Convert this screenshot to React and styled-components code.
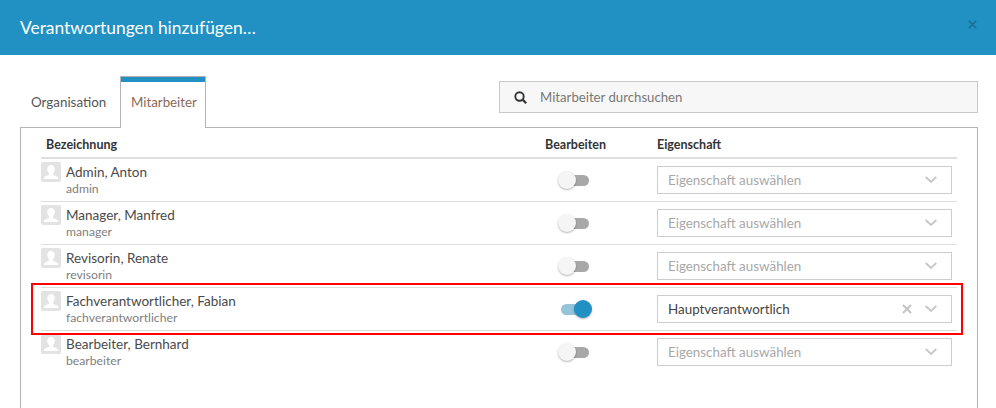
import React from "react";
import styled, { createGlobalStyle } from "styled-components";

const Global = createGlobalStyle`
  html, body {
    margin: 0;
    padding: 0;
    background: #fff;
    overflow: hidden;
  }
  body {
    font-family: "Lato", "Liberation Sans", sans-serif;
    color: #444;
  }
`;

const Modal = styled.div`
  position: relative;
  width: 996px;
  height: 408px;
  overflow: hidden;
`;

const Header = styled.header`
  height: 55px;
  background: #2191c3;
  display: flex;
  align-items: center;
  justify-content: space-between;
  padding: 0 19px 0 20px;
  h1 {
    margin: 0;
    font-size: 17.4px;
    font-weight: 400;
    color: #fff;
  }
  svg {
    display: block;
    margin-bottom: 7px;
  }
`;

const Body = styled.div`
  padding: 21px 18px 0 20px;
`;

const TopRow = styled.div`
  display: flex;
  justify-content: space-between;
  align-items: flex-start;
`;

const Tabs = styled.div`
  display: flex;
  align-items: flex-start;
  height: 51px;
  position: relative;
  z-index: 1;
`;

const Tab = styled.div`
  box-sizing: border-box;
  width: 100px;
  height: 51px;
  padding: 17px 0 0 11px;
  font-size: 13.4px;
  line-height: 18px;
  color: #555;
`;

const ActiveTab = styled.div`
  box-sizing: border-box;
  width: 86px;
  height: 52px;
  padding: 0 0 0 10px;
  font-size: 13.3px;
  line-height: 18px;
  color: #8a6a58;
  background: #fff;
  border: 1px solid #b4b4b4;
  border-bottom: none;
  &::before {
    content: "";
    display: block;
    height: 5px;
    margin: 0 0 11px -10px;
    background: #2191c3;
  }
`;

const Search = styled.div`
  box-sizing: border-box;
  width: 479px;
  height: 32px;
  margin-top: 5px;
  display: flex;
  align-items: center;
  gap: 13px;
  padding-left: 14px;
  background: #f7f7f7;
  border: 1px solid #c8c8c8;
  font-size: 13.2px;
  color: #777;
`;

const Panel = styled.div`
  box-sizing: border-box;
  width: 958px;
  height: 300px;
  border: 1px solid #b4b4b4;
  padding: 0 20px;
`;

const Row = styled.div`
  display: grid;
  grid-template-columns: 504px 112px 1fr;
  box-sizing: border-box;
  height: 43px;
  border-bottom: 1px solid ${(p) => (p.$last ? "transparent" : "#dedede")};
`;

const HeadRow = styled(Row)`
  height: 31px;
  border-bottom: 2px solid #dedede;
`;

const HeadCell = styled.div`
  font-size: 12.5px;
  font-weight: 700;
  line-height: 34px;
  color: #333;
  padding-left: ${(p) => p.$indent || 0}px;
`;

const Person = styled.div`
  display: flex;
  gap: 5px;
  padding-top: 3px;
`;

const Avatar = styled.div`
  width: 20px;
  height: 20px;
  border-radius: 2px;
  background: #e3e3e3;
  overflow: hidden;
  svg {
    display: block;
  }
`;

const Name = styled.div`
  font-size: 13.5px;
  line-height: 17px;
  color: #4a4a4a;
  margin-top: 2px;
`;

const Login = styled.div`
  font-size: 12.2px;
  line-height: 15px;
  color: #808080;
`;

const ToggleCell = styled.div`
  display: flex;
  align-items: center;
  padding-left: 16px;
`;

const Track = styled.div`
  position: relative;
  width: 28px;
  height: 11px;
  border-radius: 6px;
  background: ${(p) => (p.$on ? "#93c4da" : "#a8a8a8")};
`;

const Knob = styled.div`
  position: absolute;
  top: -4px;
  ${(p) => (p.$on ? "right: -3px;" : "left: -3px;")}
  width: 18px;
  height: 18px;
  border-radius: 50%;
  background: ${(p) => (p.$on ? "#2191c3" : "#f5f5f5")};
  box-shadow: 0 1px 2px rgba(0, 0, 0, 0.3);
`;

const SelectCell = styled.div`
  display: flex;
  align-items: center;
  padding-right: 5px;
`;

const Select = styled.div`
  box-sizing: border-box;
  width: 100%;
  height: 28px;
  display: flex;
  align-items: center;
  padding: 0 14px 0 10px;
  border: 1px solid #cdcdcd;
  background: #fff;
  font-size: 13.4px;
  color: ${(p) => (p.$value ? "#444" : "#a8a8a8")};
  span {
    flex: 1;
  }
  svg {
    display: block;
  }
`;

const Clear = styled.div`
  margin-right: 13px;
`;

const Highlight = styled.div`
  position: absolute;
  left: 31px;
  top: 283px;
  width: 932px;
  height: 52px;
  box-sizing: border-box;
  border: 2px solid #f00;
  pointer-events: none;
`;

const people = [
  { name: "Admin, Anton", login: "admin" },
  { name: "Manager, Manfred", login: "manager" },
  { name: "Revisorin, Renate", login: "revisorin" },
  { name: "Fachverantwortlicher, Fabian", login: "fachverantwortlicher", on: true, value: "Hauptverantwortlich" },
  { name: "Bearbeiter, Bernhard", login: "bearbeiter" },
];

function PersonIcon() {
  return (
    <svg width="20" height="20" viewBox="0 0 20 20">
      <path
        fill="#fff"
        d="M10 3c2.400 0 3.700 1.700 3.700 4 0 1.800-.8 3.400-1.700 4.300v1.300c0 .6 3.600 1.500 4.600 2.300.5.4.6 1.100.6 2.100H2.800c0-1 .1-1.700.6-2.100 1-.8 4.600-1.700 4.600-2.300v-1.300C7.100 10.400 6.300 8.800 6.300 7c0-2.300 1.300-4 3.700-4z"
      />
    </svg>
  );
}

function Chevron() {
  return (
    <svg width="12" height="8" viewBox="0 0 12 8">
      <path d="M.7 1l5.300 5L11.300 1" fill="none" stroke="#c8c8c8" strokeWidth="2" />
    </svg>
  );
}

function Cross({ size = 10, color = "#c4c4c4", width = 2 }) {
  return (
    <svg width={size} height={size} viewBox="0 0 10 10">
      <path d="M1 1l8 8M9 1l-8 8" fill="none" stroke={color} strokeWidth={width} />
    </svg>
  );
}

function SearchIcon() {
  return (
    <svg width="13" height="13" viewBox="0 0 13 13">
      <circle cx="5.500" cy="5.500" r="4.200" fill="none" stroke="#333" strokeWidth="1.900" />
      <path d="M8.600 8.600L12.200 12.200" stroke="#333" strokeWidth="2.200" />
    </svg>
  );
}

export default function App() {
  return (
    <Modal>
      <Global />
      <Header>
        <h1>Verantwortungen hinzufügen…</h1>
        <Cross size={9} color="#1c7099" />
      </Header>
      <Body>
        <TopRow>
          <Tabs>
            <Tab>Organisation</Tab>
            <ActiveTab>Mitarbeiter</ActiveTab>
          </Tabs>
          <Search>
            <SearchIcon />
            Mitarbeiter durchsuchen
          </Search>
        </TopRow>
        <Panel>
          <HeadRow>
            <HeadCell $indent={5}>Bezeichnung</HeadCell>
            <HeadCell>Bearbeiten</HeadCell>
            <HeadCell>Eigenschaft</HeadCell>
          </HeadRow>
          {people.map((p, i) => (
            <Row key={p.login} $last={i === people.length - 1}>
              <Person>
                <Avatar>
                  <PersonIcon />
                </Avatar>
                <div>
                  <Name>{p.name}</Name>
                  <Login>{p.login}</Login>
                </div>
              </Person>
              <ToggleCell>
                <Track $on={p.on}>
                  <Knob $on={p.on} />
                </Track>
              </ToggleCell>
              <SelectCell>
                <Select $value={p.value}>
                  <span>{p.value || "Eigenschaft auswählen"}</span>
                  {p.value && (
                    <Clear>
                      <Cross />
                    </Clear>
                  )}
                  <Chevron />
                </Select>
              </SelectCell>
            </Row>
          ))}
        </Panel>
      </Body>
      <Highlight />
    </Modal>
  );
}
